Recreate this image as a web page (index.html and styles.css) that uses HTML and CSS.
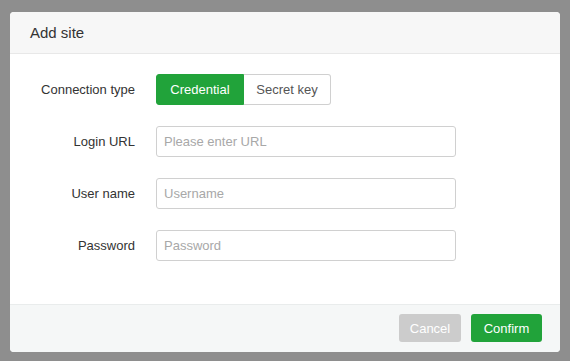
FILE: index.html
```html
<!DOCTYPE html>
<html lang="en">
<head>
    <meta charset="UTF-8">
    <meta name="viewport" content="width=device-width, initial-scale=1.0">
    <title>Add site</title>
    <link rel="stylesheet" href="styles.css">
</head>
<body>
    <div class="dialog">
        <div class="dialog-header">Add site</div>
        <div class="dialog-body">
            <label class="form-label">Connection type</label>
            <div class="segmented">
                <button class="seg-btn active">Credential</button>
                <button class="seg-btn">Secret key</button>
            </div>
            <label class="form-label">Login URL</label>
            <input class="form-input" type="text" placeholder="Please enter URL">
            <label class="form-label">User name</label>
            <input class="form-input" type="text" placeholder="Username">
            <label class="form-label">Password</label>
            <input class="form-input" type="password" placeholder="Password">
        </div>
        <div class="dialog-footer">
            <button class="btn btn-cancel" disabled>Cancel</button>
            <button class="btn btn-confirm">Confirm</button>
        </div>
    </div>
</body>
</html>
```

FILE: styles.css
```css
*{
    margin:0;
    padding:0;
    box-sizing: border-box;
}
body{
    background-color: #8e8e8e;
    padding:12px 10px;
    font-family: "Liberation Sans", Arial, sans-serif;
    font-size: 13px;
    color:#333;
}
.dialog{
    width:550px;
    height:340px;
    background-color: white;
    border-radius: 4px;
    overflow: hidden;
    display: flex;
    flex-direction: column;
}
.dialog-header{
    height:42px;
    padding:0 20px;
    display: flex;
    align-items: center;
    background-color: #f7f7f7;
    border-bottom: 1px solid #e8e8e8;
    font-size: 15px;
    color:#333;
}
.dialog-body{
    flex:1;
    display: grid;
    grid-template-columns: 125px 300px;
    grid-auto-rows: 30px;
    column-gap: 21px;
    row-gap: 22px;
    align-items: center;
    padding-top:20px;
    align-content: start;
}
.form-label{
    text-align: right;
    color:#333;
}
.segmented{
    display: flex;
    height:31px;
    margin-top:1px;
}
.seg-btn{
    font-family: inherit;
    font-size: 13px;
    padding:0;
    height:31px;
    border:1px solid #d0d0d0;
    background-color: white;
    color:#555;
}
.seg-btn:first-child{
    width:88px;
    border-radius: 3px 0 0 3px;
}
.seg-btn:last-child{
    width:87px;
    border-left:none;
    border-radius: 0 3px 3px 0;
}
.seg-btn.active{
    background-color: #21a33a;
    border-color: #21a33a;
    color:white;
}
.form-input{
    width:300px;
    height:31px;
    border:1px solid #d0d0d0;
    border-radius: 3px;
    padding:0 7px;
    font-family: inherit;
    font-size: 13px;
    color:#333;
    outline: none;
}
.form-input::placeholder{
    color:#a8a8a8;
}
.dialog-footer{
    height:48px;
    background-color: #f5f7f7;
    border-top: 1px solid #e9ecec;
    display: flex;
    justify-content: flex-end;
    align-items: center;
    gap:10px;
    padding:0 18px 1px 0;
}
.btn{
    height:28px;
    border:none;
    border-radius: 3px;
    font-family: inherit;
    font-size: 13px;
    color:white;
}
.btn-cancel{
    width:62px;
    background-color: #cccccc;
}
.btn-confirm{
    width:71px;
    background-color: #21a33a;
}
```
